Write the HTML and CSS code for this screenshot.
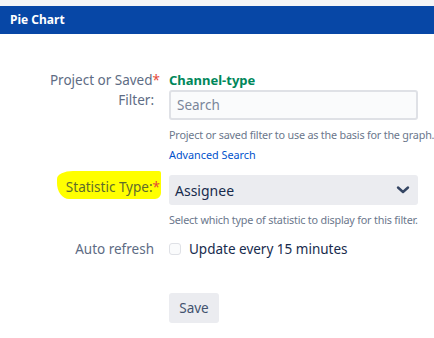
FILE: index.html
```html
<!DOCTYPE html>
<html>
<head>
<meta charset="UTF-8">
<title>Pie Chart</title>
<link rel="stylesheet" href="styles.css">
</head>
<body>

<div class="topstrip"></div>
<header>Pie Chart</header>

<div class="form">

<div class="row">
<div class="label">Project or Saved<span class="req">*</span><br>Filter:</div>
<div class="field">
<div class="picked">Channel-type</div>
<div class="input">Search</div>
<div class="desc">Project or saved filter to use as the basis for the graph.</div>
<a class="link" href="#">Advanced Search</a>
</div>
</div>

<div class="row row-stat">
<div class="label label-top"><span class="hl">Statistic Type:<span class="req">*</span></span></div>
<div class="field">
<div class="select">
<span>Assignee</span>
<svg width="14" height="10" viewBox="0 0 14 10"><path d="M2 2.5 L7 7 L12 2.5" fill="none" stroke="#344563" stroke-width="2.4" stroke-linecap="round" stroke-linejoin="round"/></svg>
</div>
<div class="desc">Select which type of statistic to display for this filter.</div>
</div>
</div>

<div class="row row-auto">
<div class="label label-mid">Auto refresh</div>
<div class="field check">
<span class="box"></span>
<span>Update every 15 minutes</span>
</div>
</div>

<div class="row row-save">
<div class="label"></div>
<div class="field">
<button class="btn">Save</button>
</div>
</div>

</div>

</body>
</html>
```

FILE: styles.css
```css
body{
    margin:0;
    background:#fff;
    font-family:"Noto Sans", "Open Sans", sans-serif;
    color:#172b4d;
    font-size:14px;
}

.topstrip{
    height:6px;
    background:#f4f5f7;
}

header{
    background:#0747a6;
    color:#fff;
    font-weight:bold;
    font-size:12px;
    height:28px;
    line-height:28px;
    padding-left:10px;
}

.form{
    padding-top:36px;
}

.row{
    display:grid;
    grid-template-columns:154px 249px;
    column-gap:15px;
}

.label{
    text-align:right;
    color:#5e6c84;
    font-size:13.5px;
    line-height:20px;
}

.label-mid{
    display:flex;
    align-items:center;
    justify-content:flex-end;
}

.label-top{
    display:flex;
    align-items:flex-start;
    justify-content:flex-end;
}

.req{
    color:#e5493a;
    margin-right:-6px;
}

.picked{
    color:#00875a;
    font-weight:bold;
    font-size:13px;
    line-height:20px;
}

.input{
    height:26px;
    border:2px solid #dfe1e6;
    background:#fafbfc;
    border-radius:3px;
    color:#7a869a;
    line-height:26px;
    padding-left:6px;
    font-size:13.5px;
}

.desc{
    font-size:10.8px;
    letter-spacing:-0.2px;
    color:#6b778c;
    line-height:16px;
    margin-top:7px;
    white-space:nowrap;
}

.link{
    display:block;
    font-size:10.8px;
    color:#0052cc;
    text-decoration:none;
    line-height:16px;
    margin-top:4px;
}

.row-stat{
    margin-top:12px;
}

.select{
    height:30px;
    background:#ebecf0;
    border-radius:3px;
    display:flex;
    align-items:center;
    justify-content:space-between;
    padding:0 8px 0 6px;
    font-size:14px;
}

.hl{
    display:inline-block;
    background:#ffff00;
    color:#5e6c2c;
    line-height:18px;
    padding:7px 1px 3px 9px;
    margin-top:-4px;
    margin-right:-7px;
    border-radius:16px 2px 6px 12px / 8px 2px 6px 16px;
}

.hl .req{
    margin-right:0;
}

.row-auto{
    margin-top:11px;
    height:20px;
}

.check{
    display:flex;
    align-items:center;
    gap:8px;
    font-size:13.5px;
}

.box{
    width:10px;
    height:10px;
    border:1.5px solid #dfe1e6;
    background:#fafbfc;
    border-radius:3px;
}

.row-save{
    margin-top:34px;
}

.btn{
    font-family:inherit;
    font-size:13.5px;
    color:#42526e;
    background:#ebecf0;
    border:none;
    border-radius:3px;
    width:50px;
    height:30px;
}
```
